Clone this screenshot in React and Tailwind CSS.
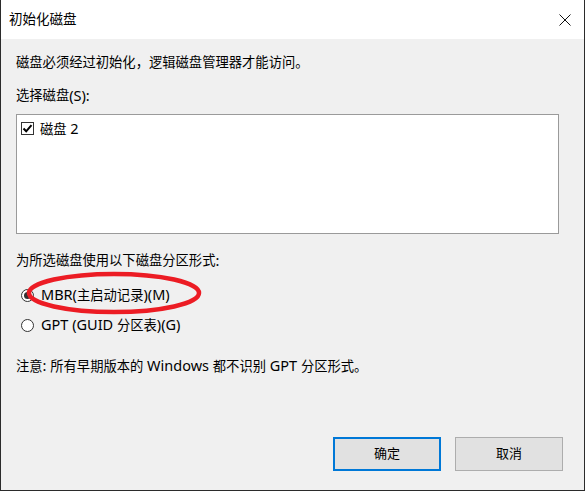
import React from "react";

const font = {
  fontFamily: '"Noto Sans", "Noto Sans CJK SC", sans-serif',
};

// Latin runs render a bit larger than the CJK ones, like YaHei UI does
function L({ children }) {
  return <span className="text-[14.5px]">{children}</span>;
}

function Radio({ checked }) {
  return (
    <span className="w-[13px] h-[13px] rounded-full border border-[#333] bg-white flex items-center justify-center shrink-0">
      {checked && <span className="w-[7px] h-[7px] rounded-full bg-[#333]" />}
    </span>
  );
}

function Row({ className = "", children }) {
  return (
    <div className={"h-[18px] flex items-center text-[13.3px] text-black whitespace-pre " + className}>
      {children}
    </div>
  );
}

export default function App() {
  return (
    <div
      className="relative w-[585px] h-[491px] flex flex-col border-l border-r border-b border-[#2b2b2b] bg-[#f0f0f0]"
      style={font}
    >
      <div className="h-[39px] bg-white flex items-center justify-between pl-[8px] pr-[13px]">
        <span className="text-[13.5px] text-black">初始化磁盘</span>
        <svg width="12" height="12" viewBox="0 0 12 12">
          <path d="M0.5 0.5 L11.5 11.5 M11.5 0.5 L0.5 11.5" stroke="#111" strokeWidth="1" />
        </svg>
      </div>

      <div className="flex-1 flex flex-col pl-[15px] pr-[21px]">
        <Row className="mt-[15px]">磁盘必须经过初始化，逻辑磁盘管理器才能访问。</Row>
        <Row className="mt-[15px]">
          <span>选择磁盘</span>
          <L>(S):</L>
        </Row>
        <div className="mt-[9px] h-[120px] w-[543px] border border-[#9a9a9a] bg-white pt-[6px] pl-[4px]">
          <div className="flex items-center gap-[6px] text-[13.3px] h-[15px]">
            <span className="w-[13px] h-[13px] border border-[#333] bg-white flex items-center justify-center">
              <svg width="11" height="11" viewBox="0 0 11 11">
                <path d="M1.5 5.5 L4.2 8.3 L9.5 2.2" fill="none" stroke="#000" strokeWidth="2" />
              </svg>
            </span>
            <span className="whitespace-pre">
              磁盘<L> 2</L>
            </span>
          </div>
        </div>
        <Row className="mt-[18px]">
          <span>为所选磁盘使用以下磁盘分区形式</span>
          <L>:</L>
        </Row>
        <Row className="mt-[16px] gap-[7px] pl-[5px]">
          <Radio checked />
          <span>
            <L>MBR(</L>主启动记录<L>)(M)</L>
          </span>
        </Row>
        <Row className="mt-[12px] gap-[7px] pl-[5px]">
          <Radio />
          <span>
            <L>GPT (GUID </L>分区表<L>)(G)</L>
          </span>
        </Row>
        <Row className="mt-[23px]">
          <span>
            注意<L>: </L>所有早期版本的<L> Windows </L>都不识别<L> GPT </L>分区形式。
          </span>
        </Row>

        <div className="mt-[62px] flex justify-end gap-[14px]">
          <button className="w-[108px] h-[34px] border-2 border-[#0078d7] bg-[#e1e1e1] text-[13px] text-black">
            确定
          </button>
          <button className="w-[108px] h-[34px] border border-[#adadad] bg-[#e1e1e1] text-[13px] text-black">
            取消
          </button>
        </div>
      </div>

      <svg
        className="absolute left-[24px] top-[270px] pointer-events-none"
        width="180"
        height="46"
        viewBox="0 0 180 46"
      >
        <ellipse cx="89" cy="23" rx="85" ry="19" fill="none" stroke="#ec1c24" strokeWidth="4.5" />
      </svg>
    </div>
  );
}
